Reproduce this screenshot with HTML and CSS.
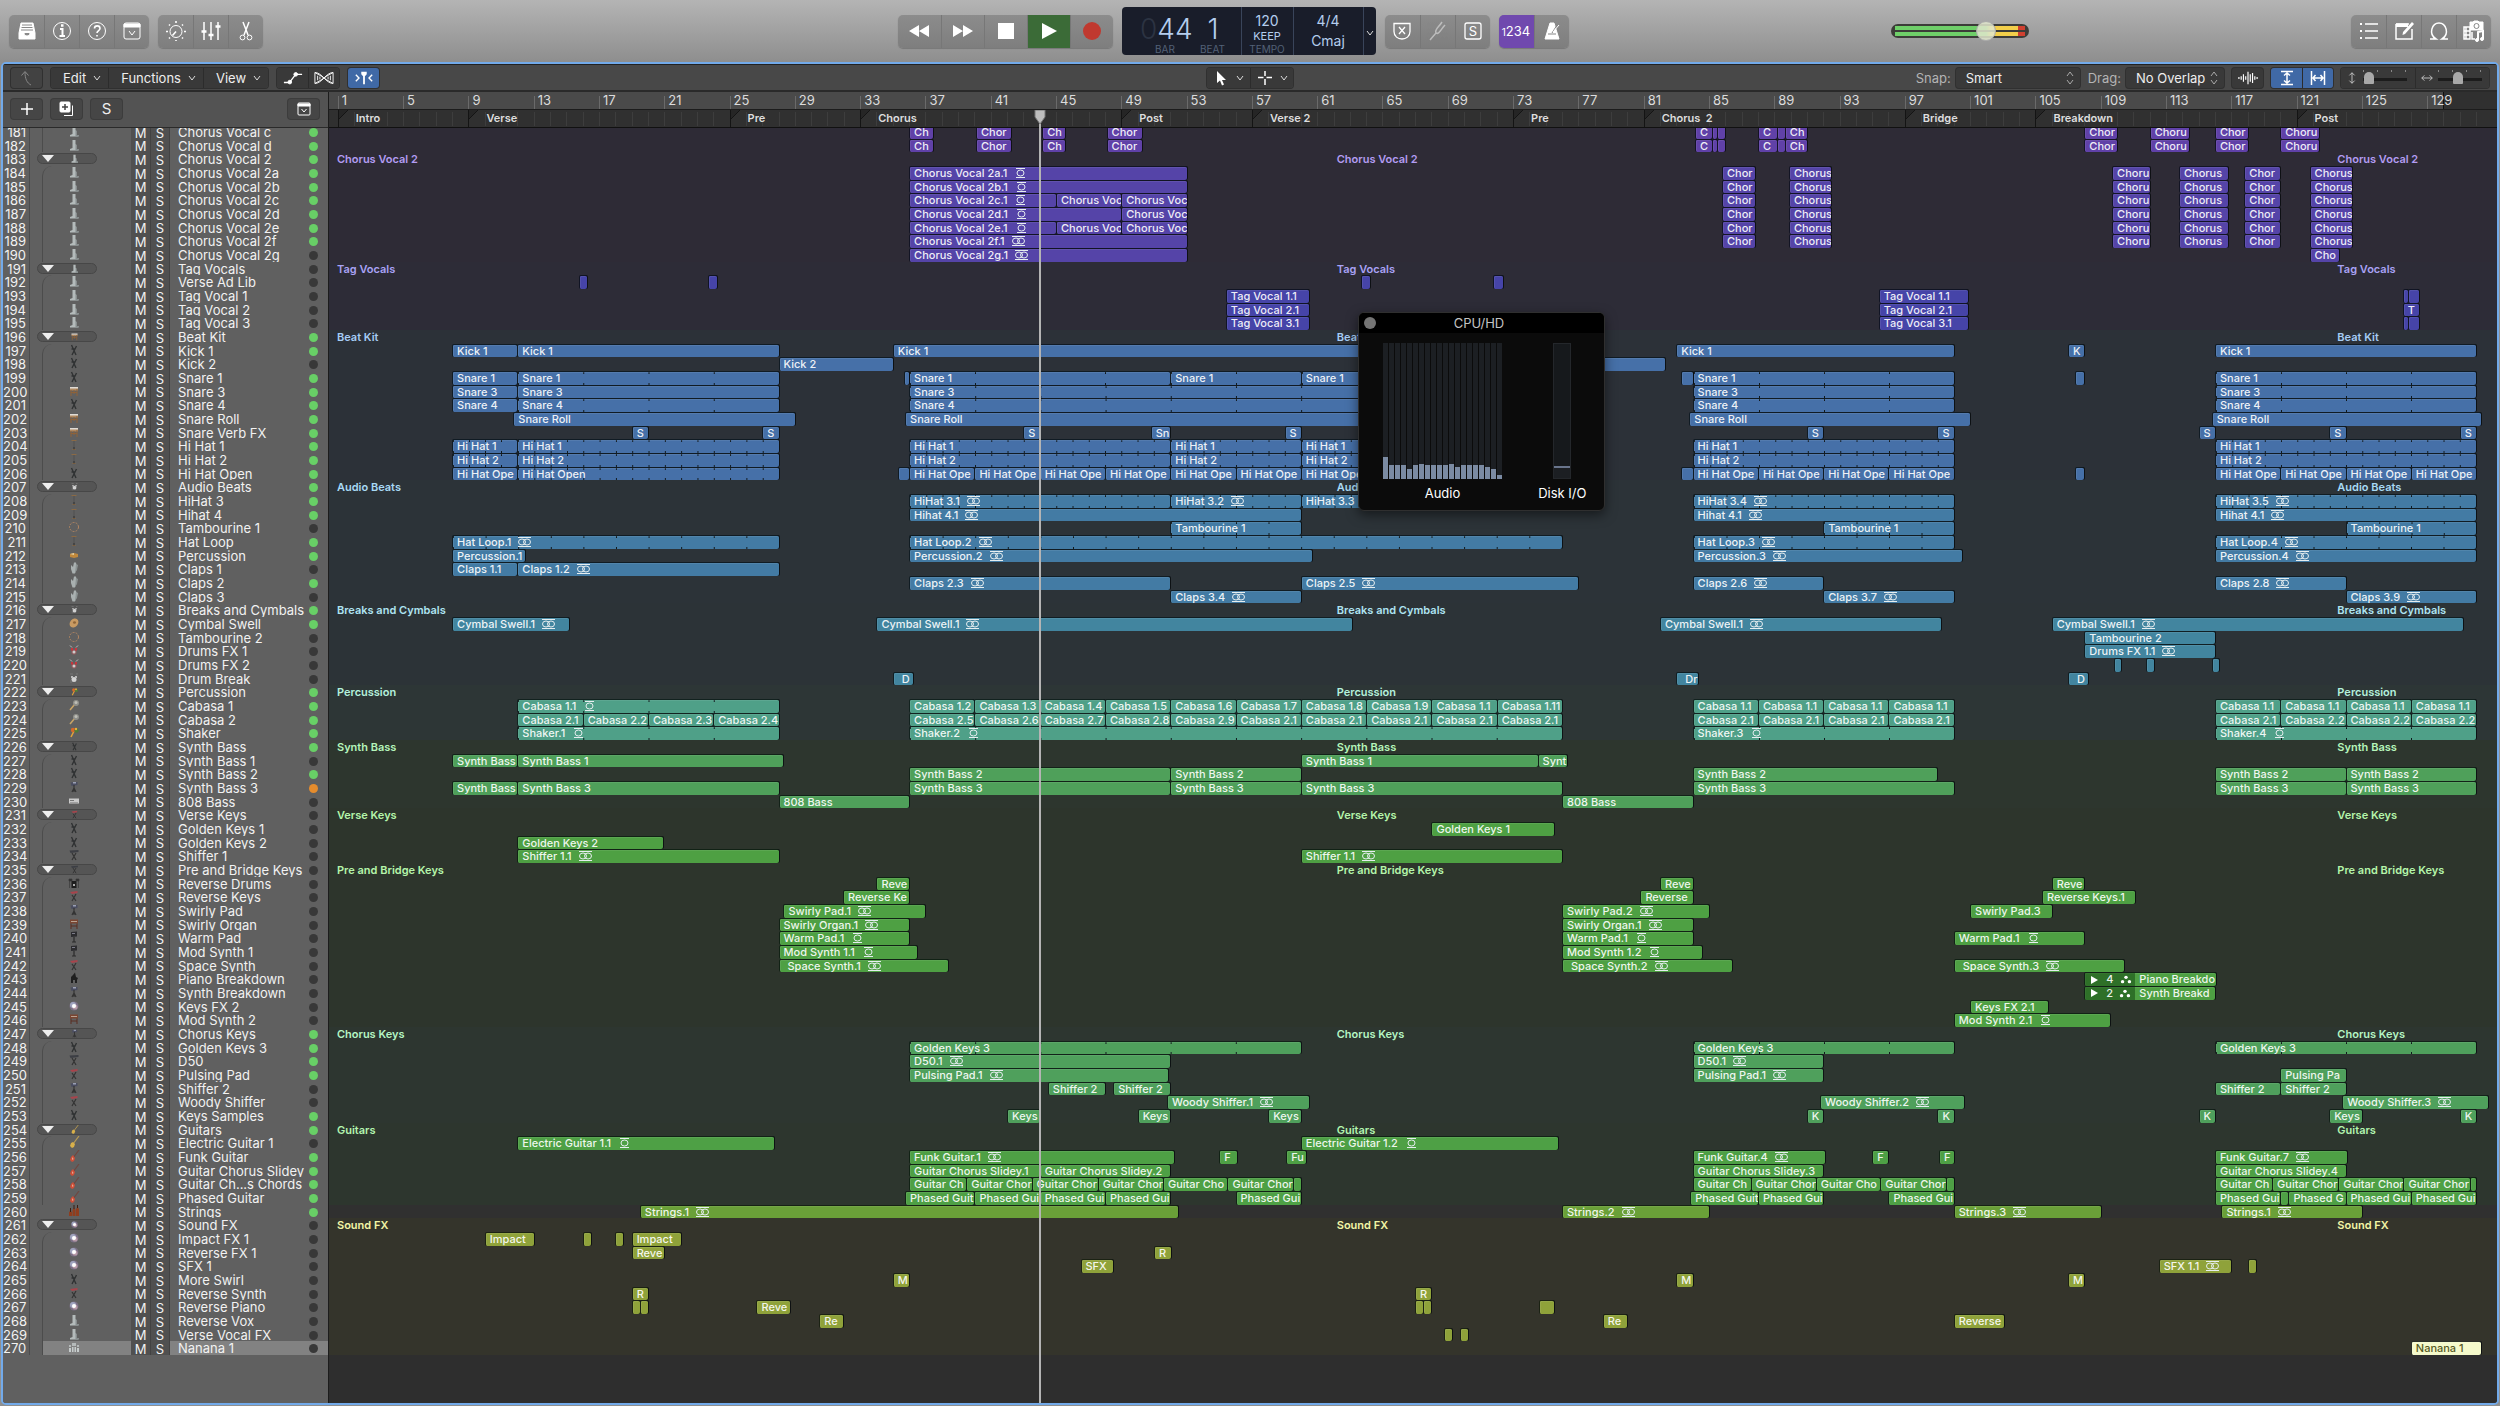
FILE: index.html
```
<!DOCTYPE html>
<html lang="en">
<head>
	<meta charset="utf-8">
	<title>Tracks</title>
	<link rel="stylesheet" href="styles.css">
</head>
<body>

<!-- shared icons -->
<svg class="defs" aria-hidden="true">
	<symbol id="chev" viewBox="0 0 8 6"><path d="M1 1l3 4 3-4" fill="none" stroke="currentColor"/></symbol>
	<symbol id="stereo" viewBox="0 0 15 10"><path d="M1 .5h13M1 9.500h13" stroke="currentColor"/><ellipse cx="5" cy="5" rx="3.500" ry="3" fill="none" stroke="currentColor"/><ellipse cx="10" cy="5" rx="3.500" ry="3" fill="none" stroke="currentColor"/></symbol>
	<symbol id="mono" viewBox="0 0 15 10"><path d="M3 .5h9M3 9.500h9" stroke="currentColor"/><ellipse cx="7.500" cy="5" rx="3.500" ry="3" fill="none" stroke="currentColor"/></symbol>
	<symbol id="take" viewBox="0 0 14 10"><circle cx="7" cy="2.5" r="2"/><circle cx="3" cy="7.5" r="2"/><circle cx="11" cy="7.5" r="2"/></symbol>
	<!-- track icons -->
	<symbol id="mic" viewBox="0 0 12 12"><path d="M4.5 1h3v4l1 1v4h2v1.500H2V10l2.500-1z" fill="#b4bbbb"/><path d="M7.500 1v4l1 1v4h2v1.500h-3z" fill="#868d8e"/></symbol>
	<symbol id="stand" viewBox="0 0 12 12"><path d="M3.500 1l4.500 10M8.500 2L4 11M3.500 5h4" stroke="#303233" stroke-width="1.400" fill="none"/></symbol>
	<symbol id="synth" viewBox="0 0 12 12"><path d="M1.500 1.500l9-.5v2l-8 1z" fill="#3c3e44"/><path d="M4 4l4 7M8 4l-4 7" stroke="#333" stroke-width="1.200"/></symbol>
	<symbol id="synthblue" viewBox="0 0 12 12"><path d="M2.500 1.500l7-.5v3l-6 1z" fill="#4a4d60"/><path d="M5 1h3v1.500H5z" fill="#9aa0b4"/><path d="M6 4v7M4 11l2-4 2 4" stroke="#333" fill="none" stroke-width="1.200"/></symbol>
	<symbol id="synthred" viewBox="0 0 12 12"><path d="M2 2l7.500-1v2L4 4z" fill="#a8444c"/><path d="M4 5l4 6M8 4l-4 7" stroke="#333" stroke-width="1.200"/></symbol>
	<symbol id="organ" viewBox="0 0 12 12"><path d="M2 1.500h8v4H2z" fill="#7a4632"/><path d="M3 3.200h6v.8H3z" fill="#c9b9a9"/><path d="M3 5.500V11M9 5.500V11M3 8h6" stroke="#5a2f22"/></symbol>
	<symbol id="rack" viewBox="0 0 12 12"><path d="M3 1l6-.5v5L3 6z" fill="#2d2d30"/><path d="M4 2h3v1H4z" fill="#7b7b88"/><path d="M6 6v5M4 11h4" stroke="#2a2a2a" stroke-width="1.200"/></symbol>
	<symbol id="piano" viewBox="0 0 12 12"><path d="M3 11V5l2-2 2-2.500L8 5l2 1-1 2v3H7V8H5v3z" fill="#1f1f1f"/></symbol>
	<symbol id="drum" viewBox="0 0 12 12"><path d="M2 3h8v2.500H2z" fill="#b08a62"/><path d="M2 2h8v1.500H2z" fill="#e0dcd6"/><path d="M3 5v6M9 4v7M6 5v4M3 7.500h6" stroke="#8f6238"/></symbol>
	<symbol id="hat" viewBox="0 0 12 12"><path d="M3.500 1.500h5M4.500 10.500h3" stroke="#8b6a45"/><path d="M6 2v8" stroke="#505050"/><path d="M5.500 8h1v2.500h-1z" fill="#333"/></symbol>
	<symbol id="tamb" viewBox="0 0 12 12"><circle cx="6" cy="6" r="4.500" fill="none" stroke="#b28662" stroke-dasharray="2 1.200"/></symbol>
	<symbol id="conga" viewBox="0 0 12 12"><path d="M2 5l4-1 4 1v3L6 9 2 8z" fill="#c0883c"/><path d="M2 5l4-1v2z" fill="#e4cfa0"/></symbol>
	<symbol id="clap" viewBox="0 0 12 12"><path d="M3 3l2 2 1-4.500h2L9 6l-2 5.500H4.500L3 7z" fill="#a9b0b0"/><path d="M8 2l2 1-1 5-2 3z" fill="#8b9292"/></symbol>
	<symbol id="cymbal" viewBox="0 0 12 12"><ellipse cx="6" cy="6" rx="5" ry="4" transform="rotate(-50 6 6)" fill="#c89a62"/><ellipse cx="6.500" cy="5.500" rx="1.500" ry="1.200" fill="#8f6538"/></symbol>
	<symbol id="kitred" viewBox="0 0 12 12"><path d="M2 1.500l2 2M10 1.500l-2 2" stroke="#bbb"/><circle cx="6" cy="8" r="2.600" fill="#8e5a5c"/><circle cx="6" cy="8" r="1.500" fill="#ccc"/><path d="M3 4h2v2.500H3zM7 4h2v2.500H7z" fill="#c7343c"/></symbol>
	<symbol id="kit" viewBox="0 0 12 12"><circle cx="6" cy="7.500" r="2.500" fill="#d2d2d2"/><path d="M3 4h2v2H3zM7 4h2v2H7z" fill="#bbb"/><path d="M2 2h3M8 2h2M3 8v3" stroke="#777"/></symbol>
	<symbol id="cabasa" viewBox="0 0 12 12"><path d="M2 11l5-6" stroke="#c9a566" stroke-width="1.500"/><circle cx="8" cy="4" r="3" fill="#8f8f8a"/><circle cx="8" cy="3.500" r="1.500" fill="#bdbdb6"/></symbol>
	<symbol id="shaker" viewBox="0 0 12 12"><path d="M3 11l3-6" stroke="#e2a33a" stroke-width="1.500"/><circle cx="5" cy="4" r="2.200" fill="#d6692a"/><circle cx="8.500" cy="4.500" r="2.200" fill="#4d7b37"/><circle cx="8" cy="3" r="1.200" fill="#eab13c"/></symbol>
	<symbol id="box" viewBox="0 0 12 12"><path d="M1 3.500h10v5H1z" fill="#c9c9c9"/><path d="M2 5h4v1H2zM2 7h8v.6H2z" fill="#777"/></symbol>
	<symbol id="kitblack" viewBox="0 0 12 12"><path d="M3.500 4h5v7h-5z" fill="#1d1d1d"/><path d="M1 2h3v2H1zM8 2h3v2H8zM1.500 4v7M10.500 4v7" fill="#2f2f2f" stroke="#3a3a3a" stroke-width=".7"/><path d="M5 7h2v2H5z" fill="#aaa"/></symbol>
	<symbol id="fx" viewBox="0 0 12 12"><circle cx="6" cy="6" r="4.500" fill="#8c7a9e" opacity=".6"/><circle cx="5" cy="5" r="3" fill="#b9c8e6" opacity=".6"/><circle cx="7" cy="7" r="2.600" fill="#e0b8c0" opacity=".6"/><circle cx="6" cy="6" r="2" fill="#fff"/></symbol>
	<symbol id="gtryellow" viewBox="0 0 12 12"><path d="M11 0L5 8" stroke="#b99b52" stroke-width="1.200"/><path d="M3 7l2-1 2 2-1 3-2 1-2-2z" fill="#d8b04a"/></symbol>
	<symbol id="gtrred" viewBox="0 0 12 12"><path d="M11 0L5 8" stroke="#6e4740" stroke-width="1.200"/><path d="M3 7l2-2 2 3-1 3-2 1-2-2z" fill="#cf4f38"/><path d="M4 7l1.500 2-1 1z" fill="#f3c9b4"/></symbol>
	<symbol id="strings" viewBox="0 0 12 12"><path d="M1 11V7l1.500-1L4 7v4zM4.500 11V5L6 3l1.500 2v6zM8 11V4l1.500-2L11 4v7z" fill="#8f3d1e"/><path d="M2.500 3v4M6 0v4M9.500 0v3" stroke="#3b1d12"/></symbol>
	<symbol id="choir" viewBox="0 0 12 12"><path d="M1 11V7h2v4zM4 11V6h1.500v5zM6.500 11V6H8v5zM9 11V7h2v4z" fill="#c6cccc"/><path d="M2 4v2M5 2v3M7 2v3M10 4v2" stroke="#c6cccc" stroke-width="1.500"/></symbol>
</svg>

<header class="control-bar">
	<div class="group">
		<button class="tool" aria-label="Library"><svg viewBox="0 0 22 22"><path d="M5 3h12l2 10v6H3v-6z" fill="#fff"/><path d="M6 5h10M5.500 7.500h11M5 10h12" stroke="#888"/><path d="M3 13h5c0 4 6 4 6 0h5" fill="#8a8a8a"/></svg></button>
		<button class="tool" aria-label="Inspector"><svg viewBox="0 0 22 22"><circle cx="11" cy="11" r="8.500"/><path d="M9 9h2.500v7M8.500 16h5.500" stroke-width="2"/><path d="M10 5.500h2.500" stroke-width="2.500"/></svg></button>
		<button class="tool" aria-label="Quick Help"><svg viewBox="0 0 22 22"><circle cx="11" cy="11" r="8.500"/><path d="M8.500 8.500c0-3.500 5.500-3.500 5.500 0 0 2-3 2.200-3 4.500M11 15v1.500" stroke-width="1.600"/></svg></button>
		<button class="tool" aria-label="Toolbar"><svg viewBox="0 0 22 22"><rect x="3" y="3" width="16" height="16" rx="2"/><path d="M3 4h16v3H3z" fill="#fff"/><path d="M8 11l3 4 3-4"/></svg></button>
	</div>
	<div class="group">
		<button class="tool" aria-label="Smart Controls"><svg viewBox="0 0 22 22"><circle cx="11" cy="11.500" r="6"/><path d="M11 11.500l-3.500 4M11 1v2M11 20v1M1 11.500h2M19 11.500h2M4 4.500l1 1M18 4.500l-1 1M4 18.500l1-1M18 18.500l-1-1" stroke-width="1.600"/></svg></button>
		<button class="tool" aria-label="Mixer"><svg viewBox="0 0 22 22"><path d="M4 2v18M11 2v18M18 2v18" stroke-width="1.500"/><path d="M1.500 11.500h5M8.500 15h5M15.500 6.500h5" stroke-width="2.500"/></svg></button>
		<button class="tool" aria-label="Editors"><svg viewBox="0 0 22 22"><path d="M8 2l5 13M14 2L9 15" stroke-width="1.500"/><circle cx="7.500" cy="17.500" r="2.400"/><circle cx="14.500" cy="17.500" r="2.400"/></svg></button>
	</div>
	<div class="space wide"></div>

	<div class="group transport">
		<button class="tool" aria-label="Rewind"><svg viewBox="0 0 22 22"><path d="M11 5v12L1 11zM21 5v12l-10-6z" class="solid"/></svg></button>
		<button class="tool" aria-label="Forward"><svg viewBox="0 0 22 22"><path d="M1 5v12l10-6zM11 5v12l10-6z" class="solid"/></svg></button>
		<button class="tool" aria-label="Stop"><svg viewBox="0 0 22 22"><path d="M3 3h16v16H3z" class="solid"/></svg></button>
		<button class="tool play" aria-label="Play"><svg viewBox="0 0 22 22"><path d="M4 3v16l15-8z" class="solid"/></svg></button>
		<button class="tool" aria-label="Record"><svg viewBox="0 0 22 22"><circle cx="11" cy="11" r="9" fill="#c0392f" stroke="none"/></svg></button>
	</div>
	<div class="lcd">
		<div class="lcd-pos">
			<div class="lcd-num"><span class="dim">0</span>44</div>
			<div class="lcd-num">1</div>
			<small>BAR</small>
			<small>BEAT</small>
		</div>
		<div class="lcd-cell"><b>120</b><span class="keep">KEEP</span><small>TEMPO</small></div>
		<div class="lcd-cell sig"><b>4/4</b><b>Cmaj</b></div>
		<button class="lcd-menu" aria-label="Display mode"><svg class="chev"><use href="#chev"/></svg></button>
	</div>
	<div class="group">
		<button class="tool" aria-label="Replace"><svg viewBox="0 0 22 22"><path d="M3 3.500h16v8c0 5-4 7.500-8 7.500s-8-2.500-8-7.500z" stroke-width="1.300"/><path d="M8 7l6 7M14 7l-6 7" stroke-width="1.300"/></svg></button>
		<button class="tool faded" aria-label="Tuner"><svg viewBox="0 0 22 22"><path d="M3 20l6-7c-2-3 3-6 6-11M9 13c3 2 5-4 9-8" stroke-width="1.500"/></svg></button>
		<button class="tool" aria-label="Solo"><svg viewBox="0 0 22 22"><rect x="3" y="3" width="16" height="16" rx="2" stroke-width="1.300"/><text x="11" y="16" class="glyph">S</text></svg></button>
	</div>
	<div class="group">
		<button class="tool count" aria-label="Count In"><small>1</small>234</button>
		<button class="tool" aria-label="Metronome"><svg viewBox="0 0 22 22"><path d="M9 3h4l5 16H4z" fill="#fff"/><path d="M7 14h8M11 13l5-8" stroke="#858585"/><path d="M12 12l6-7"/></svg></button>
	</div>
	<div class="space"></div>
	<label class="volume"><span class="leds"></span><span class="leds"></span><input type="range" min="0" max="100" value="72" aria-label="Master volume"></label>
	<div class="space"></div>
	<div class="group">
		<button class="tool" aria-label="List Editors"><svg viewBox="0 0 22 22"><path d="M7 4h13M7 11h13M7 18h13" stroke-width="1.500"/><path d="M2 4h2M2 11h2M2 18h2" stroke-width="2"/></svg></button>
		<button class="tool" aria-label="Note Pads"><svg viewBox="0 0 22 22"><path d="M3 4h13M19 9v10H3V4" stroke-width="1.500"/><path d="M3 3.500h12V7H3zM19 2l2 2-9 10-2.500 1 .5-3z" fill="#fff" stroke="none"/></svg></button>
		<button class="tool" aria-label="Loop Browser"><svg viewBox="0 0 22 22"><path d="M2 19h6c-8-5-4-16 3-16s11 11 3 16h6" stroke-width="1.500"/></svg></button>
		<button class="tool" aria-label="Browsers"><svg viewBox="0 0 22 22"><path d="M7 2h3l1-1h4l1 1h4v8H7z" fill="#fff"/><circle cx="13.500" cy="6" r="2.500" stroke="#888"/><path d="M1 7h6v12H1zM1 11h6M1 15h6M3 7v12M9 12v7h3" stroke-width="1.500"/><path d="M15 20v-8l5-1v8" stroke-width="2"/><circle cx="14" cy="20" r="1.500" fill="#fff"/><circle cx="19" cy="19" r="1.500" fill="#fff"/></svg></button>
	</div>
</header>

<main class="window">
	<div class="menu-bar">
		<div class="side left">
			<button class="btn off" aria-label="Leave folder"><svg viewBox="0 0 16 16"><path d="M12 15C8 13 6 9 6 2M2.500 5.500L6 1.500l3.500 4"/></svg></button>
			<div class="btns menus">
				<button class="btn">Edit <svg class="chev"><use href="#chev"/></svg></button>
				<button class="btn">Functions <svg class="chev"><use href="#chev"/></svg></button>
				<button class="btn">View <svg class="chev"><use href="#chev"/></svg></button>
			</div>
			<div class="btns">
				<button class="btn" aria-label="Automation"><svg class="lg" viewBox="0 0 22 14"><path d="M1 12h6l7-9h7" stroke-width="1.500"/><circle cx="7.500" cy="11.500" r="2" fill="#fff"/><circle cx="14" cy="3" r="2" fill="#fff"/></svg></button>
				<button class="btn" aria-label="Flex"><svg class="lg" viewBox="0 0 22 14"><path d="M1 1l9 5v2l-9 5zM21 1l-9 5v2l9 5zM1 1c8 0 12 12 20 12M1 13C9 13 13 1 21 1M4 4.500v5M6.500 5.500v3M18 4.500v5M15.500 5.500v3"/></svg></button>
			</div>
			<button class="btn on" aria-label="Catch playhead"><svg class="lg" viewBox="0 0 22 14"><path d="M2 3.500L5.500 7 2 10.500M20 3.500L16.500 7l3.500 3.500" stroke-width="1.500"/><path d="M8 0h6v3l-2 2v9h-2V5L8 3z" class="solid"/></svg></button>
		</div>
		<div class="btns tools">
			<button class="btn" aria-label="Pointer tool"><svg viewBox="0 0 16 16"><path d="M4 1v12l3-2.500 2 5 2-1-2-4.500h4z" class="solid"/></svg><svg class="chev"><use href="#chev"/></svg></button>
			<button class="btn" aria-label="Marquee tool"><svg viewBox="0 0 16 16"><path d="M8 1v5M8 9v6M1 7.500h5.500M9.500 7.500H15" stroke-width="1.500"/></svg><svg class="chev"><use href="#chev"/></svg></button>
		</div>
		<div class="side right">
			<label class="pick">Snap: <select class="snap"><option>Smart</option></select></label>
			<label class="pick">Drag: <select class="drag"><option>No Overlap</option></select></label>
			<button class="btn" aria-label="Waveform zoom"><svg class="lg" viewBox="0 0 22 14"><path d="M1 6v2M3.500 5v4M6 3v8M8.500 5v4M11 0v14M13.500 3v8M16 1.500v11M18.500 5v4M21 6v2" stroke-width="1.300"/></svg></button>
			<div class="btns">
				<button class="btn on" aria-label="Vertical auto zoom"><svg viewBox="0 0 16 16"><path d="M2 1.500h12M2 14.500h12M8 3v10M5 5.500L8 3l3 2.500M5 10.500L8 13l3-2.500" stroke-width="1.500"/></svg></button>
				<button class="btn on" aria-label="Horizontal auto zoom"><svg viewBox="0 0 16 16"><path d="M1.500 1v14M14.500 1v14M3 8h10M5.500 5L3 8l2.500 3M10.500 5L13 8l-2.500 3" stroke-width="1.500"/></svg></button>
			</div>
			<div class="btns zooms">
				<label class="zoom"><svg viewBox="0 0 12 16"><path d="M6 2v12M3 5l3-3 3 3M3 11l3 3 3-3"/></svg><input type="range" min="0" max="100" value="4" aria-label="Vertical zoom"></label>
				<label class="zoom"><svg viewBox="0 0 16 16"><path d="M2 8h12M5 5L2 8l3 3M11 5l3 3-3 3"/></svg><input type="range" min="0" max="100" value="45" aria-label="Horizontal zoom"></label>
			</div>
		</div>
	</div>

	<div class="workspace">
		<section class="track-list">
			<div class="track-tools">
				<button class="btn" aria-label="New track"><svg viewBox="0 0 16 16"><path d="M8 2v12M2 8h12" stroke-width="1.500"/></svg></button>
				<button class="btn" aria-label="Duplicate track"><svg viewBox="0 0 16 16"><rect x="1" y="1" width="10" height="10" rx="1" fill="#fff"/><path d="M6 3v6M3 6h6" stroke="#444" stroke-width="1.500"/><path d="M13.500 4.500v10H5"/></svg></button>
				<button class="btn letter">S</button>
				<button class="btn last" aria-label="Track header options"><svg viewBox="0 0 16 16"><rect x="2" y="2" width="12" height="12" rx="1"/><path d="M2 3h12v2H2z" fill="#fff"/><path d="M5.500 8L8 11l2.500-3"/></svg></button>
			</div>
			<div class="scroller"><ol class="rows" id="heads"></ol></div>
		</section>
		<section class="timeline">
			<div class="ruler" id="ruler"></div>
			<div class="markers" id="markers"></div>
			<div class="scroller"><div class="rows" id="lanes"></div></div>
			<div class="playhead" id="playhead"><svg viewBox="0 0 12 14"><path d="M1 0h10v7l-5 7-5-7z" fill="#bdbdbd"/></svg></div>
		</section>
	</div>

	<aside class="cpu">
		<div class="cpu-title"><button aria-label="Close"></button>CPU/HD</div>
		<div class="cpu-body">
			<div class="meter"><div class="bars" id="bars"></div>Audio</div>
			<div class="meter"><div class="disk"></div>Disk I/O</div>
		</div>
	</aside>
</main>

<script src="script.js"></script>
</body>
</html>
```
FILE: styles.css
```
* { box-sizing: border-box; }

body {
	margin: 0;
	height: 100vh;
	display: flex;
	flex-direction: column;
	overflow: hidden;
	background: #8f8f8f;
	color: #e8e8e8;
	font: 13px/16px Inter, "Liberation Sans", sans-serif;
}

button, select, input { font: inherit; color: inherit; margin: 0; }
button { border: 0; padding: 0; background: none; }
svg { fill: none; stroke: #fff; }
svg .solid { fill: #fff; stroke: none; }
.defs { position: absolute; width: 0; height: 0; }

/* control bar */
.control-bar {
	flex: none;
	height: 62px;
	display: flex;
	align-items: center;
	gap: 9px;
	padding: 0 9px;
	background: linear-gradient(#b4b4b4, #8e8e8e);
}
.space { flex: 1; }
.space.wide { flex: 2; margin-right: 8px; }
.group {
	display: flex;
	height: 33px;
	border-radius: 5px;
	overflow: hidden;
	background: linear-gradient(#8c8c8c, #7e7e7e);
	box-shadow: 0 1px 1px #777;
}
.tool { width: 35px; display: flex; align-items: center; justify-content: center; }
.tool + .tool { border-left: 1px solid #777; }
.tool svg { width: 22px; height: 22px; }
.transport .tool { width: 43px; }
.transport .play { background: #3b6b37; }
.faded svg { opacity: .45; }
.glyph { font: 13px Inter, sans-serif; fill: #fff; stroke: none; text-anchor: middle; }
.tool.count { background: #7049ae; color: #fff; align-items: baseline; line-height: 33px; }
.count small { font-size: 10px; }

.lcd {
	display: flex;
	height: 48px;
	width: 254px;
	border-radius: 4px;
	background: #191d2a;
	color: #b4cdee;
}
.lcd small { font-size: 10px; line-height: 12px; color: #536177; text-align: center; }
.lcd-pos {
	width: 119px;
	display: grid;
	grid-template-columns: 63px 32px;
	grid-template-rows: 33px 12px;
	padding: 3px 0 0 12px;
	text-align: right;
}
.lcd-num { font-size: 28px; line-height: 38px; font-weight: 300; padding-right: 4px; }
.lcd-num + .lcd-num { padding-right: 10px; }
.dim { color: #2c3342; }
.lcd-cell {
	width: 52px;
	display: flex;
	flex-direction: column;
	align-items: center;
	padding-top: 6px;
	border-left: 1px solid #39445a;
}
.lcd-cell b { font-weight: 400; font-size: 14px; }
.keep { font-size: 11px; line-height: 14px; }
.sig { width: 70px; gap: 4px; }
.lcd-menu { flex: 1; border-left: 1px solid #39445a; }
.chev { width: 8px; height: 6px; color: #ddd; }

.volume {
	position: relative;
	width: 138px;
	height: 14px;
	padding: 2px 4px;
	display: grid;
	gap: 2px;
	border-radius: 7px;
	background: #3c3c38;
}
.leds { background: linear-gradient(90deg, #6fcf69 70%, #f3cf4a 74%, #f3cf4a 95%, #cf4030 95%); }
.volume input {
	position: absolute;
	inset: -4px 0;
	appearance: none;
	background: none;
	width: 100%;
}
.volume input::-webkit-slider-thumb {
	appearance: none;
	width: 20px;
	height: 20px;
	border-radius: 50%;
	border: 1px solid #aaa;
	background: rgba(225, 230, 205, .85);
}

/* window */
.window {
	position: relative;
	flex: 1;
	min-height: 0;
	display: flex;
	flex-direction: column;
	margin: 0 1px 1px;
	border: 2px solid #72aaea;
	border-radius: 5px;
	overflow: hidden;
	background: #474747;
}
.menu-bar {
	flex: none;
	height: 28px;
	display: grid;
	grid-template-columns: 1fr auto 1fr;
	align-items: center;
	padding: 0 8px;
	background: #484848;
	border-top: 1px solid #222;
	border-bottom: 2px solid #2a2a2a;
}
.side, .btns, .track-tools { display: flex; align-items: center; }
.side { gap: 8px; }
.side.left { gap: 9px; }
.side.right { justify-content: flex-end; }
.btn {
	height: 20px;
	min-width: 31px;
	display: flex;
	align-items: center;
	justify-content: center;
	gap: 7px;
	border-radius: 3px;
	background: #393939;
	box-shadow: 0 0 0 1px #303030;
	color: #eee;
}
.btn svg { width: 16px; height: 16px; }
.btn svg.lg { width: 20px; height: 14px; }
.btn svg.chev { width: 8px; height: 6px; stroke: none; }
.btns { border-radius: 3px; box-shadow: 0 0 0 1px #303030; overflow: hidden; }
.btns .btn { border-radius: 0; box-shadow: none; }
.btns .btn + .btn { border-left: 1px solid #2c2c2c; }
.menus .btn { padding: 0 7px 0 12px; }
.btn.on { background: #4069a6; }
.btn.off { background: #424242; }
.btn.off svg { stroke: #888; }
.tools .btn { width: 43px; }
.pick { display: flex; align-items: center; gap: 5px; color: #b4b4b4; }
.pick select {
	appearance: none;
	height: 20px;
	padding: 0 10px;
	border: 0;
	border-radius: 3px;
	color: #eee;
	background: #393939 url("data:image/svg+xml,%3Csvg xmlns='http://www.w3.org/2000/svg' width='8' height='14' fill='none' stroke='%23aaa'%3E%3Cpath d='M1 5l3-4 3 4M1 9l3 4 3-4'/%3E%3C/svg%3E") no-repeat right 6px center;
	box-shadow: 0 0 0 1px #303030;
}
.snap { width: 124px; }
.drag { width: 98px; }
.zoom { display: flex; align-items: center; gap: 4px; height: 20px; width: 74px; padding-left: 4px; background: #393939; }
.zoom + .zoom { border-left: 1px solid #2c2c2c; }
.zoom svg { width: 14px; height: 14px; stroke: #ccc; }
.zoom input {
	appearance: none;
	width: 44px;
	height: 20px;
	background:
		linear-gradient(#1c1c1c, #1c1c1c) 0 10px / 100% 3px no-repeat,
		repeating-linear-gradient(90deg, #888 0 1px, transparent 1px 14px) 0 2px / 100% 2px no-repeat;
}
.zoom input::-webkit-slider-thumb {
	appearance: none;
	width: 10px;
	height: 12px;
	border-radius: 5px 5px 1px 1px;
	background: #a8a8a8;
}

.workspace { flex: 1; min-height: 0; display: flex; }
.track-list { width: 325px; flex: none; display: flex; flex-direction: column; background: #606060; }
.track-tools { height: 36px; gap: 9px; padding: 0 9px 2px 8px; background: #535353; border-bottom: 1px solid #2a2a2a; }
.track-tools .btn { background: #464646; box-shadow: 0 0 0 1px #3c3c3c; }
.letter { font-size: 15px; }
.last { margin-left: auto; }

/* both columns share the same row grid so heads and lanes stay level */
.scroller { flex: 1; min-height: 0; overflow: hidden; padding-bottom: 48px; }
.rows {
	display: grid;
	grid-auto-rows: minmax(0, 1fr);
	height: calc(100% + 3px);
	margin: -3px 0 0;
	padding: 0;
	list-style: none;
}

.head {
	display: grid;
	grid-template-columns: 27px 12px 89px 20px 19px minmax(0, 1fr) 30px;
	line-height: 14px;
	color: #f2f2f2;
	overflow: hidden;
}
.head > * { border-bottom: 1px solid #4a4a4a; white-space: nowrap; }
.num { text-align: right; padding-right: 3px; line-height: 15px; border-right: 1px solid #4c4c4c; }
.ms { background: #505050; border-right: 1px solid #424242; line-height: 14px; }
.gutter { border-bottom-color: #606060; }
.pic { padding-left: 25px; border-left: 1px solid #4c4c4c; overflow: hidden; }
.pic svg { display: block; width: 12px; height: 12px; stroke: none; }
.first .pic { border-top-left-radius: 10px; }
.name { padding-left: 8px; }
.state { display: flex; align-items: center; justify-content: center; }
.dot { width: 9px; height: 9px; border-radius: 50%; background: #383838; }
.dot.on { background: #68cf66; }
.dot.warn { background: #e58c2d; }
.folder .pic { grid-column: 2 / 4; border-left: 0; padding-left: 7px; }
.pill {
	width: 60px;
	height: 11px;
	margin-top: 1px;
	padding-left: 4px;
	display: flex;
	align-items: center;
	gap: 16px;
	border: 1px solid #474747;
	border-radius: 6px;
	background: #555;
}
.pill svg { width: 9px; height: 9px; }
.fold { border: 6px solid transparent; border-top: 7px solid #eee; border-bottom: 0; }
.loose .pic { grid-column: 2 / 4; border-left: 0; padding-left: 38px; }
.selected .pic, .selected .name, .selected .state { background: #828282; }

/* timeline */
.timeline {
	position: relative;
	flex: 1;
	min-width: 0;
	display: flex;
	flex-direction: column;
	background: #2e2e2e;
	border-left: 1px solid #1c1c1c;
}
.ruler, .markers { position: relative; overflow: hidden; flex: none; }
.ruler { height: 18px; background: #4a4a4a; border-bottom: 1px solid #1c1c1c; }
.markers { height: 18px; background: #303030; border-bottom: 1px solid #111; }
.beat, .marker, .tick, .region, .group-name, .ended, .playhead { position: absolute; }
.beat { top: 1px; height: 16px; padding-left: 4px; line-height: 14px; color: #dcdcdc;
	background: linear-gradient(#6a6a6a, #6a6a6a) 0 3px / 1px 13px no-repeat; }
.ended { right: 0; top: 0; height: 100%; background: rgba(0, 0, 0, .35); border-left: 1px solid #111; }
.tick { top: 2px; bottom: 1px; width: 1px; background: #3d3d3d; }
.marker {
	height: 17px;
	padding-left: 17px;
	font-size: 11px;
	line-height: 16px;
	font-weight: 600;
	color: #dedede;
	border-left: 1px solid #141414;
	background: linear-gradient(135deg, #252525 6px, #141414 6px 7px, transparent 7px) no-repeat;
}
.playhead { top: 18px; bottom: 0; width: 12px; margin-left: -6px; pointer-events: none;
	background: linear-gradient(90deg, transparent 5px, #b4b4b4 5px 7px, transparent 7px); }
.playhead svg { display: block; width: 12px; height: 14px; stroke: #777; }

.lane { position: relative; background: var(--bg); font-size: 11px; }
.group-name { top: 0; line-height: 14px; font-weight: 600; color: var(--label); white-space: nowrap; }
.region {
	top: 0;
	height: 100%;
	overflow: hidden;
	white-space: nowrap;
	padding-left: 4px;
	line-height: 13px;
	font-weight: 500;
	color: rgba(255, 255, 255, .92);
	border: solid rgba(8, 12, 14, .85);
	border-width: 1px 0 0 1px;
	border-radius: 2px;
	background-color: var(--fill);
	box-shadow: inset 1px 1px rgba(255, 255, 255, .08), 1px 0 rgba(8, 12, 14, .85);
}
.region svg { width: 15px; height: 10px; margin-left: 6px; vertical-align: -1px; color: #e6eef0; stroke: none; }
.region.thin { padding: 0; }
.region.inset { padding-left: 8px; }
.region.loop {
	background-image:
		linear-gradient(90deg, transparent calc(100% - 1px), #10181c calc(100% - 1px)),
		linear-gradient(90deg, transparent calc(100% - 1px), #10181c calc(100% - 1px));
	background-size: var(--loop) 2px;
	background-position: 1px 0, 1px 100%;
	background-repeat: repeat-x;
}
.region.lit { background-color: #f5facb; color: #55591f; }
.region.takes { display: flex; gap: 4px; padding: 0; }
.take-tools { flex: none; width: 50px; padding-left: 6px; display: flex; align-items: center; gap: 8px; background: rgba(0, 40, 0, .4); }
.take-tools i { border: 4px solid transparent; border-left: 7px solid #fff; border-right: 0; }
.take-tools svg { fill: #fff; margin: 0 0 0 -2px; width: 12px; height: 9px; }

/* cpu meter */
.cpu {
	position: absolute;
	left: 54.35%;
	top: 248px;
	width: 247px;
	height: 199px;
	border: 1px solid #2f2f2f;
	border-radius: 6px;
	overflow: hidden;
	background: #0b0b0b;
	box-shadow: 0 4px 12px rgba(0, 0, 0, .5);
}
.cpu-title { position: relative; height: 20px; padding-right: 6px; line-height: 20px; text-align: center; background: #000; color: #c4c4c4; }
.cpu-title button { position: absolute; left: 5px; top: 4px; width: 12px; height: 12px; border-radius: 50%; background: #757575; }
.cpu-body { display: flex; justify-content: space-between; padding: 10px 18px 0 24px; color: #fff; }
.meter { display: flex; flex-direction: column; align-items: center; gap: 6px; }
.bars { display: flex; align-items: flex-end; gap: 1px; width: 118px; height: 136px; }
.bar { flex: 1; height: 100%; display: flex; align-items: flex-end; background: #1c1f23; }
.bar span { width: 100%; background: #7b8ba3; }
.disk { width: 18px; height: 136px; background: linear-gradient(#16191c 122px, #69758c 122px 124px, #1c1f23 124px); border: 1px solid #24272b; }
```
FILE: script.js
```
// The timeline shows 132.82 bars, bar 1 starts 0.54 bars in
var SPAN = 132.82, LEAD = 0.54;

function at(bar) { return (bar - 1 + LEAD) / SPAN * 100 + '%'; }
function len(bars) { return bars / SPAN * 100 + '%'; }

// one region every `step` bars from `from`
function run(from, names, step) {
	return names.map(function (n, i) {
		return [from + i * step, from + (i + 1) * step, n];
	});
}
function same(n, times) {
	var a = [];
	while (times--) a.push(n);
	return a;
}
// the long sections most drum tracks play in
function beats(name, opts) {
	return [[8, 12, name, opts === 'l1' ? 'l1' : ''], [12, 28, name, opts], [36, 52, name, opts], [52, 60, name, opts],
		[60, 76, name, opts], [84, 100, name, opts], [116, 132, name, opts]];
}

// region: [start, end, name, options]
// options: s = stereo, m = mono, lN = loop every N bars, i = inset name, x = selected, tN = N takes
var cd = [[36, 37.45, 'Ch'], [40.1, 42.25, 'Chor'], [44.15, 45.55, 'Ch'], [48.1, 50.25, 'Chor'],
	[84.15, 85.2, 'C'], [85.2, 85.5, ''], [85.5, 86, ''], [88, 89.2, 'C'], [89.2, 89.65, ''], [89.65, 91, 'Ch'],
	[108, 110, 'Chor'], [112, 114.4, 'Choru'], [116, 118, 'Chor'], [120, 122.4, 'Choru']];
var tail = [[85.8, 87.8, 'Chor'], [89.9, 92.5, 'Chorus'], [109.7, 112, 'Choru'], [113.8, 116.8, 'Chorus'],
	[117.8, 120, 'Chor'], [121.8, 124.4, 'Chorus']];

function split(name) {
	return [[36, 45, name, 'm'], [45, 49, 'Chorus Voc'], [49, 53, 'Chorus Voc']].concat(tail);
}
function tagVocal(name, last) {
	return [[55.4, 60.5, name], [95.4, 100.85, name]].concat(last);
}
var hatOpen = same('Hi Hat Ope', 4);

var groups = [
	{ fill: '#6041a8', bg: '#2e2b36', tracks: [
		['Chorus Vocal c', 'mic', 'on', cd],
		['Chorus Vocal d', 'mic', 'on', cd]
	] },
	{ name: 'Chorus Vocal 2', icon: 'mic', state: 'on', fill: '#5544a8', bg: '#2e2b36', label: '#b39cf2', tracks: [
		['Chorus Vocal 2a', 'mic', 'on', [[36, 53, 'Chorus Vocal 2a.1', 'm']].concat(tail)],
		['Chorus Vocal 2b', 'mic', 'on', [[36, 53, 'Chorus Vocal 2b.1', 'm']].concat(tail)],
		['Chorus Vocal 2c', 'mic', 'on', split('Chorus Vocal 2c.1')],
		['Chorus Vocal 2d', 'mic', 'on', [[36, 49, 'Chorus Vocal 2d.1', 'm'], [49, 53, 'Chorus Voc']].concat(tail)],
		['Chorus Vocal 2e', 'mic', 'on', split('Chorus Vocal 2e.1')],
		['Chorus Vocal 2f', 'mic', 'on', [[36, 53, 'Chorus Vocal 2f.1', 's']].concat(tail)],
		['Chorus Vocal 2g', 'mic', '', [[36, 53, 'Chorus Vocal 2g.1', 's'], [121.8, 123.6, 'Cho']]]
	] },
	{ name: 'Tag Vocals', icon: 'mic', state: '', fill: '#4644a8', bg: '#2d2c37', label: '#a9a2f5', tracks: [
		['Verse Ad Lib', 'mic', '', [[15.75, 16.25, ''], [23.7, 24.25, ''], [63.7, 64.25, ''], [71.8, 72.4, '']]],
		['Tag Vocal 1', 'mic', '', tagVocal('Tag Vocal 1.1', [[127.5, 127.8, ''], [127.8, 128.5, '']])],
		['Tag Vocal 2', 'mic', '', tagVocal('Tag Vocal 2.1', [[127.5, 128.5, 'T']])],
		['Tag Vocal 3', 'mic', '', tagVocal('Tag Vocal 3.1', [[127.5, 127.8, ''], [127.8, 128.5, '']])]
	] },
	{ name: 'Beat Kit', icon: 'drum', state: 'on', fill: '#4670a8', bg: '#2c3138', label: '#a6cdf5', tracks: [
		['Kick 1', 'stand', 'on', [[8, 12, 'Kick 1'], [12, 28, 'Kick 1'], [35, 76, 'Kick 1'], [83, 100, 'Kick 1'], [107, 108, 'K'], [116, 132, 'Kick 1']]],
		['Kick 2', 'stand', '', [[28, 35, 'Kick 2'], [76, 82.3, 'Kick 2']]],
		['Snare 1', 'stand', 'on', beats('Snare 1', 'l4').concat([[35.7, 36, ''], [83.3, 84, ''], [107.4, 108, '']])],
		['Snare 3', 'drum', 'on', [[8, 12, 'Snare 3'], [12, 28, 'Snare 3'], [36, 76, 'Snare 3', 'l4'], [84, 100, 'Snare 3', 'l4'], [116, 132, 'Snare 3', 'l4']]],
		['Snare 4', 'stand', 'on', [[8, 12, 'Snare 4'], [12, 28, 'Snare 4', 'l4'], [36, 76, 'Snare 4', 'l4'], [84, 100, 'Snare 4', 'l4'], [116, 132, 'Snare 4', 'l4']]],
		['Snare Roll', 'drum', 'on', [[11.75, 29, 'Snare Roll'], [35.75, 77, 'Snare Roll'], [83.8, 101, 'Snare Roll'], [115.8, 132.3, 'Snare Roll']]],
		['Snare Verb FX', 'drum', 'on', [[19, 20, 'S'], [27, 28, 'S'], [43, 44, 'S'], [50.8, 52, 'Sn'], [59, 60, 'S'], [91, 92, 'S'], [99, 100, 'S'], [115, 116, 'S'], [123, 124, 'S'], [131, 132, 'S']]],
		['Hi Hat 1', 'hat', 'on', beats('Hi Hat 1', 'l1')],
		['Hi Hat 2', 'hat', 'on', beats('Hi Hat 2', 'l1')],
		['Hi Hat Open', 'stand', 'on', [[8, 12, 'Hi Hat Ope'], [12, 28, 'Hi Hat Open', 'l1'], [35.3, 36, ''], [83.3, 84, ''], [107.4, 108, '']]
			.concat(run(36, same('Hi Hat Ope', 10), 4), run(84, hatOpen, 4), run(116, hatOpen, 4))]
	] },
	{ name: 'Audio Beats', icon: 'kit', state: 'on', fill: '#437ba4', bg: '#2c3338', label: '#a8daf5', tracks: [
		['HiHat 3', 'hat', 'on', [[36, 52, 'HiHat 3.1', 's l1'], [52, 60, 'HiHat 3.2', 's l1'], [60, 76, 'HiHat 3.3', 's l1'], [84, 100, 'HiHat 3.4', 's l1'], [116, 132, 'HiHat 3.5', 's l1']]],
		['Hihat 4', 'hat', 'on', [[36, 60, 'Hihat 4.1', 's'], [84, 100, 'Hihat 4.1', 's'], [116, 132, 'Hihat 4.1', 's']]],
		['Tambourine 1', 'tamb', '', [[52, 60, 'Tambourine 1', 'l2'], [92, 100, 'Tambourine 1', 'l2'], [124, 132, 'Tambourine 1', 'l2']]],
		['Hat Loop', 'hat', 'on', [[8, 28, 'Hat Loop.1', 's l2'], [36, 76, 'Hat Loop.2', 's l2'], [84, 100, 'Hat Loop.3', 's l2'], [116, 132, 'Hat Loop.4', 's l2']]],
		['Percussion', 'conga', 'on', [[8, 12.45, 'Percussion.1'], [36, 60.7, 'Percussion.2', 's'], [84, 100.5, 'Percussion.3', 's'], [116, 132, 'Percussion.4', 's']]],
		['Claps 1', 'clap', '', [[8, 12, 'Claps 1.1'], [12, 28, 'Claps 1.2', 's']]],
		['Claps 2', 'clap', 'on', [[36, 52, 'Claps 2.3', 's'], [60, 77, 'Claps 2.5', 's'], [84, 92, 'Claps 2.6', 's'], [116, 124, 'Claps 2.8', 's']]],
		['Claps 3', 'clap', '', [[52, 60, 'Claps 3.4', 's'], [92, 100, 'Claps 3.7', 's'], [124, 132, 'Claps 3.9', 's']]]
	] },
	{ name: 'Breaks and Cymbals', icon: 'kit', state: 'on', fill: '#42859f', bg: '#2c3337', label: '#afe4f2', tracks: [
		['Cymbal Swell', 'cymbal', 'on', [[8, 15.15, 'Cymbal Swell.1', 's'], [34, 63.15, 'Cymbal Swell.1', 's'], [82, 99.2, 'Cymbal Swell.1', 's'], [106, 131.2, 'Cymbal Swell.1', 's']]],
		['Tambourine 2', 'tamb', '', [[108, 116, 'Tambourine 2']]],
		['Drums FX 1', 'kitred', '', [[108, 116, 'Drums FX 1.1', 's']]],
		['Drums FX 2', 'kitred', '', [[109.8, 110.25, ''], [111.8, 112.25, ''], [115.8, 116.25, '']]],
		['Drum Break', 'kit', '', [[35, 36.25, 'D', 'i'], [83, 84.3, 'Dr', 'i'], [107, 108.25, 'D', 'i']]]
	] },
	{ name: 'Percussion', icon: 'shaker', state: 'on', fill: '#4fa088', bg: '#2d3636', label: '#b4f0dc', tracks: [
		['Cabasa 1', 'cabasa', 'on', [[12, 28, 'Cabasa 1.1', 'm l4']].concat(
			run(36, ['Cabasa 1.2', 'Cabasa 1.3', 'Cabasa 1.4', 'Cabasa 1.5', 'Cabasa 1.6', 'Cabasa 1.7', 'Cabasa 1.8', 'Cabasa 1.9', 'Cabasa 1.1', 'Cabasa 1.11'], 4),
			run(84, same('Cabasa 1.1', 4), 4), run(116, same('Cabasa 1.1', 4), 4))],
		['Cabasa 2', 'cabasa', 'on', run(12, ['Cabasa 2.1', 'Cabasa 2.2', 'Cabasa 2.3', 'Cabasa 2.4'], 4).concat(
			run(36, ['Cabasa 2.5', 'Cabasa 2.6', 'Cabasa 2.7', 'Cabasa 2.8', 'Cabasa 2.9'], 4), run(56, same('Cabasa 2.1', 5), 4),
			run(84, same('Cabasa 2.1', 4), 4), run(116, ['Cabasa 2.1', 'Cabasa 2.2', 'Cabasa 2.2', 'Cabasa 2.2'], 4))],
		['Shaker', 'shaker', 'on', [[12, 28, 'Shaker.1', 'm l4'], [36, 76, 'Shaker.2', 'm l4'], [84, 100, 'Shaker.3', 'm l4'], [116, 132, 'Shaker.4', 'm l4']]]
	] },
	{ name: 'Synth Bass', icon: 'stand', state: 'on', fill: '#4fa05a', bg: '#2d362e', label: '#b5f5ba', tracks: [
		['Synth Bass 1', 'stand', '', [[8, 12, 'Synth Bass'], [12, 28.25, 'Synth Bass 1'], [60, 74.5, 'Synth Bass 1'], [74.5, 76.3, 'Synt']]],
		['Synth Bass 2', 'stand', 'on', [[36, 52, 'Synth Bass 2'], [52, 60, 'Synth Bass 2'], [84, 99, 'Synth Bass 2'], [116, 124, 'Synth Bass 2'], [124, 132, 'Synth Bass 2']]],
		['Synth Bass 3', 'synthblue', 'warn', [[8, 12, 'Synth Bass'], [12, 28, 'Synth Bass 3'], [36, 52, 'Synth Bass 3'], [52, 60, 'Synth Bass 3'], [60, 76, 'Synth Bass 3'], [84, 100, 'Synth Bass 3'], [116, 124, 'Synth Bass 3'], [124, 132, 'Synth Bass 3']]],
		['808 Bass', 'box', '', [[28, 36, '808 Bass'], [76, 84, '808 Bass']]]
	] },
	{ name: 'Verse Keys', icon: 'synthred', state: '', fill: '#4ea043', bg: '#2d352c', label: '#b5f5aa', tracks: [
		['Golden Keys 1', 'stand', '', [[68, 75.5, 'Golden Keys 1']]],
		['Golden Keys 2', 'stand', '', [[12, 20.95, 'Golden Keys 2']]],
		['Shiffer 1', 'synth', '', [[12, 28, 'Shiffer 1.1', 's'], [60, 76, 'Shiffer 1.1', 's']]]
	] },
	{ name: 'Pre and Bridge Keys', icon: 'synth', state: '', fill: '#4ea043', bg: '#2d352c', label: '#b5f5aa', tracks: [
		['Reverse Drums', 'kitblack', '', [[34, 36, 'Reve'], [82, 84, 'Reve'], [106, 108, 'Reve']]],
		['Reverse Keys', 'synthred', '', [[31.95, 36, 'Reverse Ke'], [80.8, 84, 'Reverse'], [105.4, 111.1, 'Reverse Keys.1']]],
		['Swirly Pad', 'synthblue', '', [[28.3, 37, 'Swirly Pad.1', 's'], [76, 85, 'Swirly Pad.2', 's'], [101, 106, 'Swirly Pad.3']]],
		['Swirly Organ', 'organ', '', [[28, 36, 'Swirly Organ.1', 's'], [76, 84, 'Swirly Organ.1', 's']]],
		['Warm Pad', 'rack', '', [[28, 36, 'Warm Pad.1', 'm'], [76, 84, 'Warm Pad.1', 'm'], [100, 108, 'Warm Pad.1', 'm']]],
		['Mod Synth 1', 'rack', '', [[28, 36.5, 'Mod Synth 1.1', 'm'], [76, 84.6, 'Mod Synth 1.2', 'm']]],
		['Space Synth', 'synthred', '', [[28, 38.4, 'Space Synth.1', 's i'], [76, 86.4, 'Space Synth.2', 's i'], [100, 110.4, 'Space Synth.3', 's i']]],
		['Piano Breakdown', 'piano', '', [[108, 116.05, 'Piano Breakdo', 't4']]],
		['Synth Breakdown', 'synthblue', '', [[108, 116, 'Synth Breakd', 't2']]],
		['Keys FX 2', 'fx', '', [[101, 105.8, 'Keys FX 2.1']]],
		['Mod Synth 2', 'organ', '', [[100, 109.6, 'Mod Synth 2.1', 'm']]]
	] },
	{ name: 'Chorus Keys', icon: 'synthblue', state: 'on', fill: '#4fa05c', bg: '#2d3630', label: '#b5f5c4', tracks: [
		['Golden Keys 3', 'stand', 'on', [[36, 60, 'Golden Keys 3', 'l4'], [84, 100, 'Golden Keys 3', 'l4'], [116, 132, 'Golden Keys 3', 'l4']]],
		['D50', 'synth', 'on', [[36, 52, 'D50.1', 's'], [84, 92, 'D50.1', 's']]],
		['Pulsing Pad', 'synthred', 'on', [[36, 51.85, 'Pulsing Pad.1', 's'], [84, 92, 'Pulsing Pad.1', 's'], [120, 124, 'Pulsing Pa']]],
		['Shiffer 2', 'synthblue', '', [[44.5, 48, 'Shiffer 2'], [48.5, 52, 'Shiffer 2'], [116, 120, 'Shiffer 2'], [120, 124, 'Shiffer 2']]],
		['Woody Shiffer', 'synthred', '', [[51.8, 60.5, 'Woody Shiffer.1', 's'], [91.8, 100.6, 'Woody Shiffer.2', 's'], [123.8, 132.75, 'Woody Shiffer.3', 's']]],
		['Keys Samples', 'stand', 'on', [[42, 44, 'Keys'], [50, 52, 'Keys'], [58, 60, 'Keys'], [91, 92, 'K'], [99, 100, 'K'], [115, 116, 'K'], [123, 125, 'Keys'], [131, 132, 'K']]]
	] },
	{ name: 'Guitars', icon: 'gtryellow', state: 'on', fill: '#4ea045', bg: '#2d362e', label: '#b3f5b0', tracks: [
		['Electric Guitar 1', 'gtryellow', '', [[12, 27.7, 'Electric Guitar 1.1', 'm'], [60, 75.75, 'Electric Guitar 1.2', 'm']]],
		['Funk Guitar', 'gtrred', 'on', [[36, 52.25, 'Funk Guitar.1', 's'], [55, 56.1, 'F'], [59.1, 60.3, 'Fu'], [84, 92.1, 'Funk Guitar.4', 's'], [95, 96, 'F'], [99.1, 100, 'F'], [116, 124.1, 'Funk Guitar.7', 's']]],
		['Guitar Chorus Slidey', 'gtrred', 'on', [[36, 44, 'Guitar Chorus Slidey.1'], [44, 52, 'Guitar Chorus Slidey.2'], [84, 92, 'Guitar Chorus Slidey.3'], [116, 124, 'Guitar Chorus Slidey.4']]],
		['Guitar Ch...s Chords', 'gtrred', 'on', [[36, 39.5, 'Guitar Ch'], [39.5, 43.5, 'Guitar Chor'], [43.5, 47.55, 'Guitar Chor'], [47.55, 51.55, 'Guitar Chor'], [51.55, 55.5, 'Guitar Cho'], [55.5, 59.5, 'Guitar Chor'], [59.5, 60, ''],
			[84, 87.55, 'Guitar Ch'], [87.55, 91.55, 'Guitar Chor'], [91.55, 95.5, 'Guitar Cho'], [95.5, 99.5, 'Guitar Chor'], [99.5, 100, ''],
			[116, 119.5, 'Guitar Ch'], [119.5, 123.55, 'Guitar Chor'], [123.55, 127.55, 'Guitar Chor'], [127.55, 131.6, 'Guitar Chor'], [131.6, 132, '']]],
		['Phased Guitar', 'gtrred', 'on', [[35.75, 40, 'Phased Guit'], [40, 44, 'Phased Gui'], [44, 48, 'Phased Gui'], [48, 52, 'Phased Gui'], [56, 60, 'Phased Gui'],
			[83.85, 88, 'Phased Guit'], [88, 92, 'Phased Gui'], [96, 100, 'Phased Gui'],
			[116, 120, 'Phased Gui'], [120, 120.5, ''], [120.5, 124, 'Phased G'], [124, 128, 'Phased Gui'], [128, 132, 'Phased Gui']]]
	] },
	{ loose: true, fill: '#6aa038', bg: '#303030', tracks: [
		['Strings', 'strings', 'on', [[19.5, 52.5, 'Strings.1', 's'], [76, 85, 'Strings.2', 's'], [100, 109, 'Strings.3', 's'], [116.4, 125, 'Strings.1', 's']]]
	] },
	{ name: 'Sound FX', icon: 'fx', state: '', fill: '#8fa23a', bg: '#34342b', label: '#f2f5a6', tracks: [
		['Impact FX 1', 'fx', '', [[10, 13, 'Impact'], [16, 16.5, ''], [18, 18.45, ''], [19, 22, 'Impact']]],
		['Reverse FX 1', 'fx', '', [[19, 21, 'Reve'], [51, 52.05, 'R']]],
		['SFX 1', 'fx', '', [[46.5, 48.5, 'SFX'], [112.55, 117, 'SFX 1.1', 's'], [118, 118.5, '']]],
		['More Swirl', 'stand', '', [[35, 36, 'M'], [83, 84, 'M'], [107, 108, 'M']]],
		['Reverse Synth', 'synthred', '', [[19, 20, 'R'], [67, 68, 'R']]],
		['Reverse Piano', 'fx', '', [[19, 19.5, ''], [19.5, 20, ''], [26.65, 28.7, 'Reve'], [67, 67.5, ''], [67.5, 68, ''], [74.6, 75.5, '']]],
		['Reverse Vox', 'mic', '', [[30.5, 31.95, 'Re'], [78.5, 80, 'Re'], [100, 103.05, 'Reverse']]],
		['Verse Vocal FX', 'mic', '', [[68.75, 69.25, ''], [69.75, 70.25, '']]],
		['Nanana 1', 'choir', '', [[128, 132.3, 'Nanana 1', 'x']], 'selected']
	] }
];

function icon(id) { return '<svg><use href="#' + id + '"/></svg>'; }

function headHtml(num, name, pic, state, cls) {
	return '<li class="head ' + cls + '"><span class="num">' + num + '</span>' +
		(/folder|loose/.test(cls) ? '' : '<span class="gutter"></span>') +
		'<span class="pic">' + pic + '</span>' +
		'<button class="ms" aria-label="Mute ' + name + '">M</button>' +
		'<button class="ms" aria-label="Solo ' + name + '">S</button>' +
		'<span class="name">' + name + '</span>' +
		'<span class="state"><button class="dot ' + state + '" aria-label="Power ' + name + '"></button></span></li>';
}

function regionHtml(r) {
	var cls = 'region', style = 'left:' + at(r[0]) + ';width:' + len(r[1] - r[0]), body = r[2];
	(r[3] || '').split(' ').forEach(function (o) {
		if (o === 's') body += icon('stereo');
		if (o === 'm') body += icon('mono');
		if (o === 'i') cls += ' inset';
		if (o === 'x') cls += ' lit';
		if (o[0] === 'l') {
			cls += ' loop';
			style += ';--loop:' + o.slice(1) / (r[1] - r[0]) * 100 + '%';
		}
		if (o[0] === 't') {
			cls += ' takes';
			body = '<span class="take-tools"><i></i>' + o.slice(1) + icon('take') + '</span>' + body;
		}
	});
	if (!r[2]) cls += ' thin';
	return '<div class="' + cls + '" style="' + style + '">' + body + '</div>';
}

function laneHtml(g, inner) {
	return '<div class="lane" style="--bg:' + g.bg + ';--fill:' + g.fill + ';--label:' + g.label + '">' + inner + '</div>';
}

var heads = '', lanes = '', num = 181;
groups.forEach(function (g) {
	if (g.name) {
		heads += headHtml(num++, g.name, '<span class="pill"><button class="fold" aria-label="Fold ' + g.name + '"></button>' + icon(g.icon) + '</span>', g.state, 'folder');
		lanes += laneHtml(g, [0.95, 62.2, 123.5].map(function (b) {
			return '<span class="group-name" style="left:' + at(b) + '">' + g.name + '</span>';
		}).join(''));
	}
	g.tracks.forEach(function (t, i) {
		var cls = g.loose ? 'loose' : (g.name && i === 0 ? 'first' : '');
		heads += headHtml(num++, t[0], icon(t[1]), t[2], cls + ' ' + (t[4] || ''));
		lanes += laneHtml(g, t[3].map(regionHtml).join(''));
	});
});
document.getElementById('heads').innerHTML = heads;
document.getElementById('lanes').innerHTML = lanes;

// ruler
var ruler = '<div class="ended" style="left:' + at(130) + '"></div>', marks = '', b;
for (b = 1; b <= 129; b += 4) ruler += '<span class="beat" style="left:' + at(b) + '">' + b + '</span>';
for (b = 2; b <= 132; b++) marks += '<i class="tick" style="left:' + at(b) + '"></i>';
[[1, 'Intro'], [9, 'Verse'], [25, 'Pre'], [33, 'Chorus'], [49, 'Post'], [57, 'Verse 2'], [73, 'Pre'],
	[81, 'Chorus&nbsp; 2'], [97, 'Bridge'], [105, 'Breakdown'], [121, 'Post']].forEach(function (m) {
	marks += '<span class="marker" style="left:' + at(m[0]) + '">' + m[1] + '</span>';
});
document.getElementById('ruler').innerHTML = ruler;
document.getElementById('markers').innerHTML = marks;
document.getElementById('playhead').style.left = at(44);

// cpu load per core, in percent
document.getElementById('bars').innerHTML = [16, 10, 10, 10, 7, 10, 11, 10, 10, 10, 10, 11, 9, 10, 10, 10, 10, 9, 7, 3].map(function (v) {
	return '<div class="bar"><span style="height:' + v + '%"></span></div>';
}).join('');
```
